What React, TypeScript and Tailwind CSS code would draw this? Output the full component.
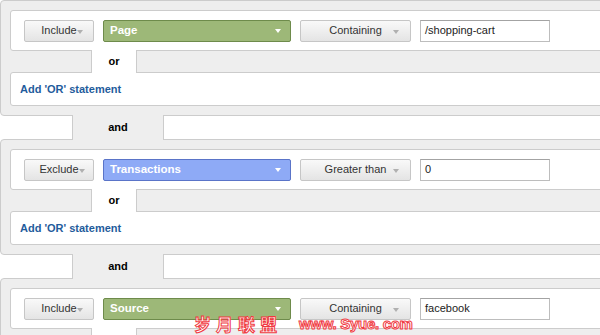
import React from 'react';

type Rule = {
  mode: string;
  dim: string;
  tone: 'green' | 'blue';
  op: string;
  value: string;
};

const rules: Rule[] = [
  { mode: 'Include', dim: 'Page', tone: 'green', op: 'Containing', value: '/shopping-cart' },
  { mode: 'Exclude', dim: 'Transactions', tone: 'blue', op: 'Greater than', value: '0' },
  { mode: 'Include', dim: 'Source', tone: 'green', op: 'Containing', value: 'facebook' },
];

function GrayArrow() {
  return <span className="block w-0 h-0 border-x-[3.5px] border-x-transparent border-t-[4px] border-t-[#b0b0b0]" />;
}

function RuleGroup({ rule }: { rule: Rule }) {
  const dimColor =
    rule.tone === 'green'
      ? 'bg-[#9db878] border-[#6e8b4b]'
      : 'bg-[#8eaaf6] border-[#5a74c8]';

  return (
    <div className="rounded-[4px] border border-[#cccccc] bg-[#eeeeee] p-[9px]">
      {/* condition row */}
      <div className="flex h-[41px] items-center gap-[9px] rounded-[3px] border border-[#cccccc] bg-white pl-[13px]">
        <button className="relative flex h-[22px] w-[70px] items-center justify-center rounded-[2px] border border-[#c6c6c6] bg-gradient-to-b from-[#f9f9f9] to-[#e4e4e4] text-[11px] text-[#333]">
          <span className="relative">
            {rule.mode}
            <span className="absolute left-full top-1/2 -mt-[1px]">
              <GrayArrow />
            </span>
          </span>
        </button>
        <div className={`flex h-[22px] w-[188px] items-center justify-between rounded-[2px] border pl-[6px] pr-[9px] text-[11.5px] font-bold text-white ${dimColor}`}>
          <span>{rule.dim}</span>
          <span className="block w-0 h-0 border-x-[3.5px] border-x-transparent border-t-[4px] border-t-white" />
        </div>
        <button className="relative flex h-[22px] w-[111px] items-center justify-center rounded-[2px] border border-[#c6c6c6] bg-gradient-to-b from-[#f9f9f9] to-[#e4e4e4] text-[11px] text-[#333]">
          <span>{rule.op}</span>
          <span className="absolute right-[11px] top-1/2 -mt-[1px]">
            <GrayArrow />
          </span>
        </button>
        <div className="flex h-[22px] w-[130px] items-center border border-[#bdbdbd] border-t-[#a3a3a3] bg-white pl-[4px] text-[11px] text-[#222]">
          {rule.value}
        </div>
      </div>

      {/* or connector */}
      <div className="relative z-10 -my-px ml-[81px] flex h-[23px] w-[46px] items-center justify-center border-x border-[#cccccc] bg-white text-[11px] font-bold text-black">
        or
      </div>

      <div className="flex h-[34px] items-center rounded-[3px] border border-[#cccccc] bg-white pl-[9px]">
        <a className="cursor-pointer text-[11px] font-bold text-[#1f5c9c]">Add 'OR' statement</a>
      </div>
    </div>
  );
}

export default function App() {
  return (
    <div className="relative h-[335px] w-[600px] overflow-hidden bg-white font-['Liberation_Sans',Arial,sans-serif]">
      <div className="w-[630px]">
        {rules.map((rule, i) => (
          <React.Fragment key={i}>
            {i > 0 && (
              <div className="relative z-10 -my-px ml-[72px] flex h-[25px] w-[92px] items-center justify-center border-x border-[#cccccc] bg-[#eeeeee] text-[11px] font-bold text-black">
                and
              </div>
            )}
            <RuleGroup rule={rule} />
          </React.Fragment>
        ))}
      </div>

      {/* watermark */}
      <div className="absolute left-[194px] top-[315px] z-20 flex items-center gap-[17px] font-bold leading-[18px] text-white [-webkit-text-stroke:1px_#f0393f]">
        <span className="text-[17px] tracking-[5px] font-['Noto_Sans_CJK_SC',sans-serif]">岁月联盟</span>
        <span className="text-[15px] tracking-[-0.3px]">www. Syue. com</span>
      </div>
    </div>
  );
}
